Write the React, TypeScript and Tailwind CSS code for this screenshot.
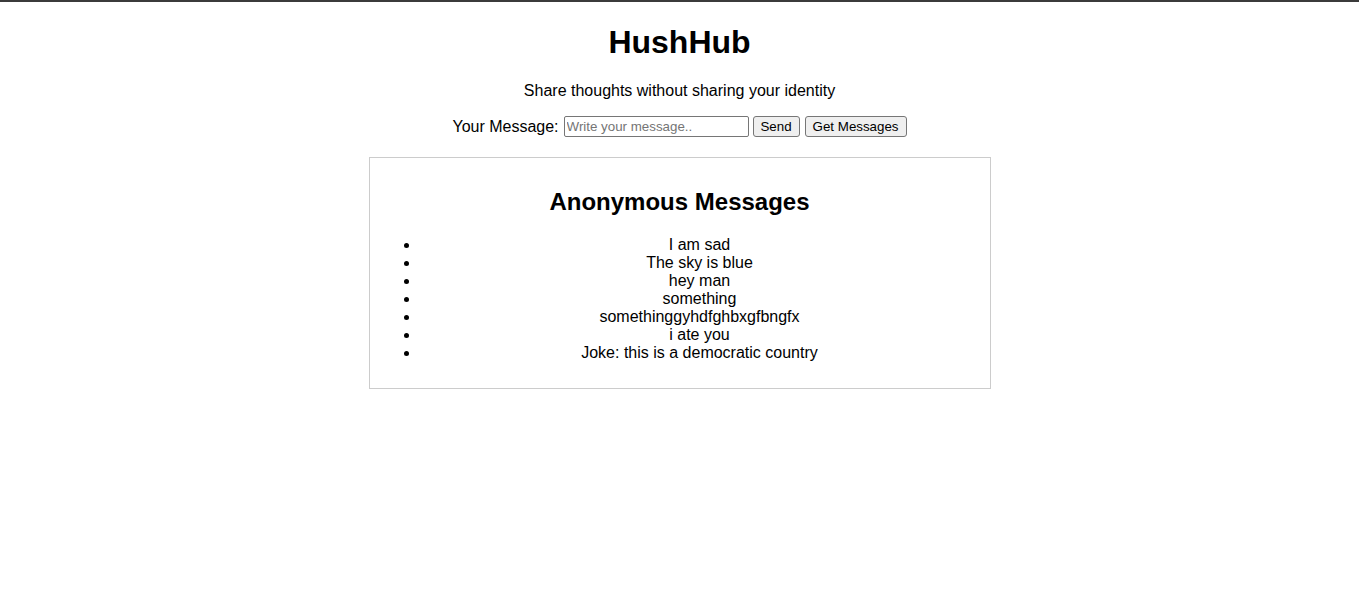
const messages = [
  "I am sad",
  "The sky is blue",
  "hey man",
  "something",
  "somethinggyhdfghbxgfbngfx",
  "i ate you",
  "Joke: this is a democratic country",
];

export default function App() {
  return (
    <div className="min-h-screen border-t-2 border-[#3b3b3b] bg-white text-center text-black font-['Liberation_Sans',Arial,sans-serif]">
      <h1 className="pt-[22px] text-[32px] font-bold leading-[37px]">HushHub</h1>
      <p className="mt-[21px] text-base leading-[18px]">Share thoughts without sharing your identity</p>

      <div className="mt-4 flex h-[21px] items-center justify-center">
        <label htmlFor="msg" className="text-base leading-[18px]">Your Message:</label>
        <input
          id="msg"
          type="text"
          placeholder="Write your message.."
          className="ml-[5px] h-[21px] w-[185px] rounded-[2px] border border-[#767676] px-[2px] text-[13.33px] placeholder:text-[#757575] outline-none"
        />
        <button className="ml-[4px] h-[21px] w-[47px] rounded-[3px] border border-[#767676] bg-[#efefef] text-[13.33px]">
          Send
        </button>
        <button className="ml-[5px] h-[21px] w-[102px] rounded-[3px] border border-[#767676] bg-[#efefef] text-[13.33px]">
          Get Messages
        </button>
      </div>

      <div className="mx-auto mt-5 w-[622px] border border-[#cccccc] p-[10px]">
        <h2 className="mt-5 text-2xl font-bold leading-[28px]">Anonymous Messages</h2>
        <ul className="mt-5 mb-4 list-disc pl-10">
          {messages.map((m) => (
            <li key={m} className="text-base leading-[18px]">{m}</li>
          ))}
        </ul>
      </div>
    </div>
  );
}
